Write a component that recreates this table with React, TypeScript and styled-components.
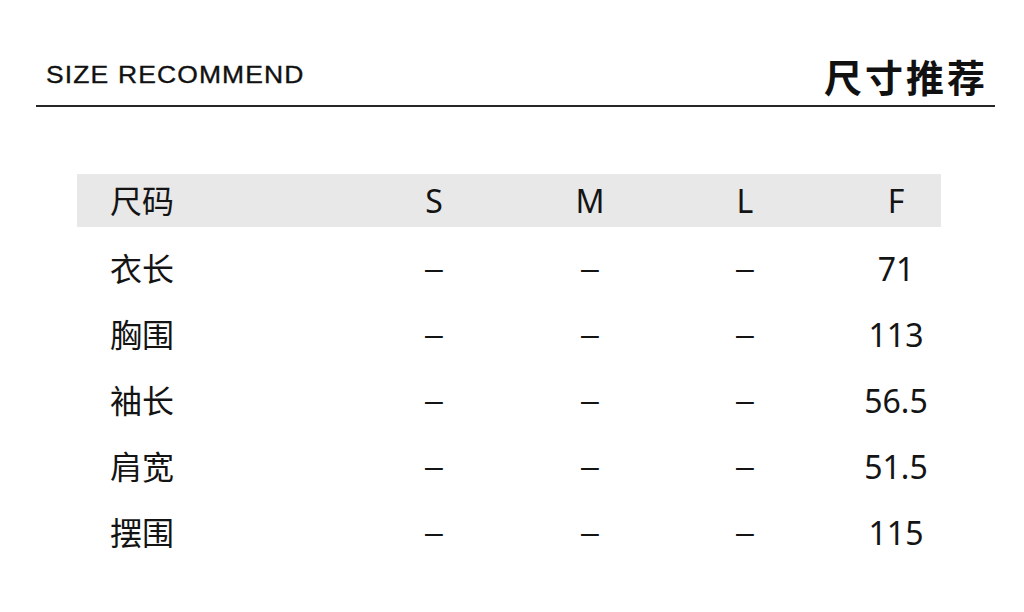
import React from "react";
import styled, { createGlobalStyle } from "styled-components";

const GlobalStyle = createGlobalStyle`
  html, body {
    margin: 0;
    padding: 0;
    background: #ffffff;
  }
  body {
    width: 1024px;
    height: 612px;
    overflow: hidden;
    font-family: "Noto Sans", "Noto Sans CJK SC", sans-serif;
    color: #111111;
  }
`;

const Page = styled.div`
  width: 1024px;
  height: 612px;
  background: #ffffff;
`;

const Header = styled.header`
  margin-left: 36px;
  width: 959px;
  height: 105px;
  display: flex;
  align-items: flex-end;
  justify-content: space-between;
  border-bottom: 2px solid #262626;
`;

const EnTitle = styled.div`
  margin: 0 0 18px 10px;
  font-family: "Liberation Sans", Arial, sans-serif;
  font-size: 23px;
  line-height: 23px;
  letter-spacing: 1px;
  color: #111111;
  -webkit-text-stroke: 0.35px #111111;
  transform: scaleX(1.15);
  transform-origin: left center;
  white-space: nowrap;
`;

const CnTitle = styled.div`
  margin: 0 7px 10px 0;
  font-family: "Noto Sans CJK SC", sans-serif;
  font-weight: 700;
  font-size: 38px;
  line-height: 38px;
  letter-spacing: 3px;
  color: #111111;
`;

const Table = styled.div`
  margin: 67px 0 0 77px;
  width: 864px;
  display: flex;
  flex-direction: column;
`;

const Row = styled.div<{ $head?: boolean }>`
  display: grid;
  grid-template-columns: 279px 156px 156px 154px 148px;
  align-items: center;
  height: ${(p) => (p.$head ? "53px" : "66px")};
  margin-bottom: ${(p) => (p.$head ? "8px" : "0")};
  background: ${(p) => (p.$head ? "#e8e8e8" : "transparent")};
  font-family: "Noto Sans", "Noto Sans CJK SC", sans-serif;
  font-size: 32px;
  line-height: ${(p) => (p.$head ? "53px" : "66px")};
  color: #141414;
`;

const Label = styled.div`
  padding-left: 33px;
  white-space: nowrap;
`;

const Cell = styled.div`
  text-align: center;
  white-space: nowrap;
`;

const Dash = styled.span`
  display: inline-block;
  font-family: "Liberation Sans", Arial, sans-serif;
  vertical-align: 3px;
`;

const sizes = ["S", "M", "L", "F"];

const rows: { label: string; values: string[] }[] = [
  { label: "衣长", values: ["–", "–", "–", "71"] },
  { label: "胸围", values: ["–", "–", "–", "113"] },
  { label: "袖长", values: ["–", "–", "–", "56.5"] },
  { label: "肩宽", values: ["–", "–", "–", "51.5"] },
  { label: "摆围", values: ["–", "–", "–", "115"] },
];

export default function App() {
  return (
    <Page>
      <GlobalStyle />
      <Header>
        <EnTitle>SIZE RECOMMEND</EnTitle>
        <CnTitle>尺寸推荐</CnTitle>
      </Header>
      <Table>
        <Row $head>
          <Label>尺码</Label>
          {sizes.map((s) => (
            <Cell key={s}>{s}</Cell>
          ))}
        </Row>
        {rows.map((r) => (
          <Row key={r.label}>
            <Label>{r.label}</Label>
            {r.values.map((v, i) => (
              <Cell key={i}>{v === "–" ? <Dash>{v}</Dash> : v}</Cell>
            ))}
          </Row>
        ))}
      </Table>
    </Page>
  );
}
